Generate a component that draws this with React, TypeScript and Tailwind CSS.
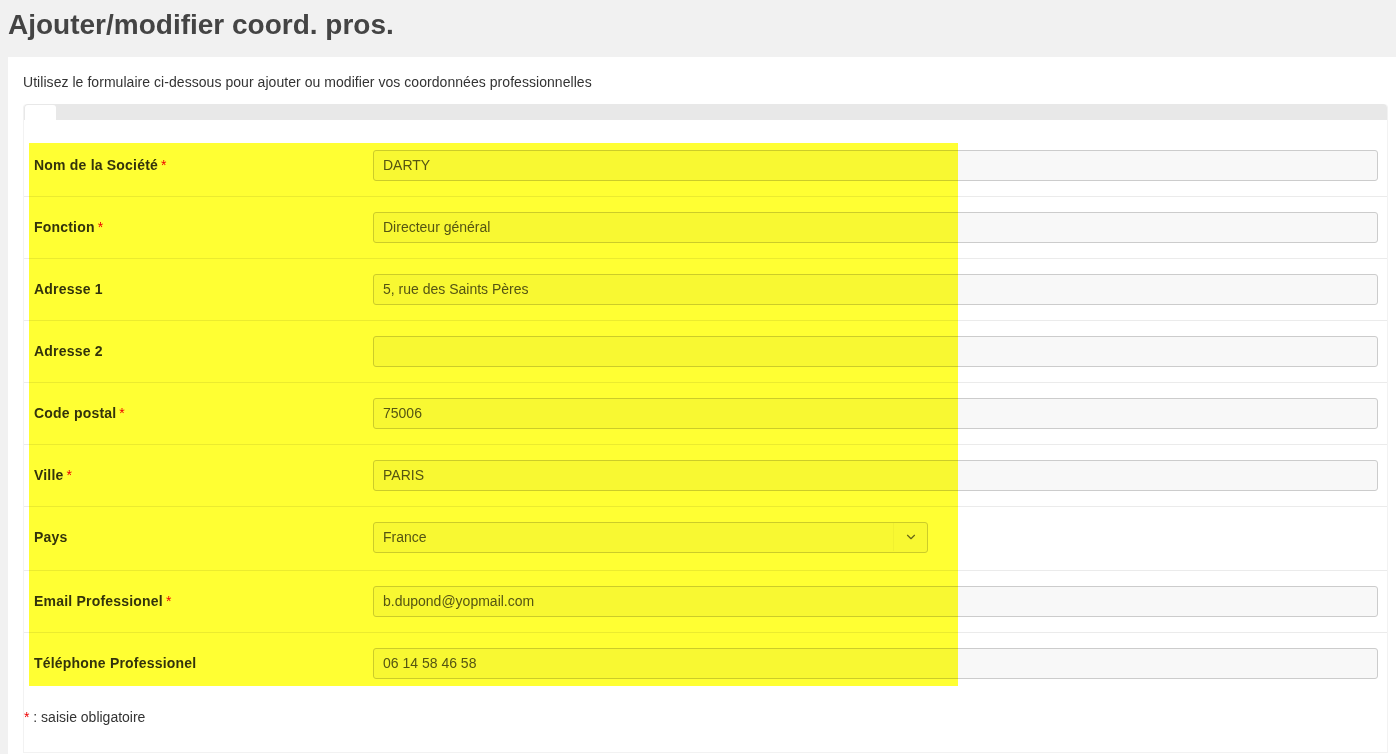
import React from 'react';
import { ChevronDown } from 'lucide-react';

type Field = { label: string; value: string; required?: boolean; select?: boolean };

const fields: Field[] = [
  { label: 'Nom de la Société', value: 'DARTY', required: true },
  { label: 'Fonction', value: 'Directeur général', required: true },
  { label: 'Adresse 1', value: '5, rue des Saints Pères' },
  { label: 'Adresse 2', value: '' },
  { label: 'Code postal', value: '75006', required: true },
  { label: 'Ville', value: 'PARIS', required: true },
  { label: 'Pays', value: 'France', select: true },
  { label: 'Email Professionel', value: 'b.dupond@yopmail.com', required: true },
  { label: 'Téléphone Professionel', value: '06 14 58 46 58' },
];

const FieldRow = ({ field, last }: { field: Field; last: boolean }) => (
  <div
    className={`flex items-center pl-[10px] pr-[9px] ${field.select ? 'pt-[15px] pb-[17px]' : 'py-[15px]'} ${last ? '' : 'border-b border-[#ebebeb]'}`}
  >
    <label className="w-[339px] shrink-0 text-[14px] font-bold tracking-[0.2px] text-[#333]">
      {field.label}
      {field.required && <span className="ml-[3px] font-normal text-[#e00]">*</span>}
    </label>
    {field.select ? (
      <div className="flex h-[31px] w-[555px] items-center rounded-[3px] border border-[#ccc] bg-[#f8f8f8] pb-[1px] text-[14px] text-[#555]">
        <span className="flex-1 pl-[9px]">{field.value}</span>
        <span className="flex h-full w-[34px] items-center justify-center border-l border-[#f0f0f0]">
          <ChevronDown className="h-[14px] w-[14px] text-[#666]" strokeWidth={2} />
        </span>
      </div>
    ) : (
      <input
        readOnly
        value={field.value}
        className="h-[31px] flex-1 rounded-[3px] border border-[#ccc] bg-[#f8f8f8] px-[9px] pb-[1px] text-[14px] text-[#555] outline-none"
      />
    )}
  </div>
);

export default function App() {
  return (
    <div className="min-h-screen bg-[#f1f1f1] font-['Liberation_Sans',Arial,sans-serif]">
      <header className="flex h-[57px] items-start px-2 pt-[11px]">
        <h1 className="text-[28px] font-bold leading-none text-[#444]">Ajouter/modifier coord. pros.</h1>
      </header>
      <main className="ml-2 min-h-[697px] bg-white pl-[15px] pr-[8px] pt-[16px]">
        <p className="text-[14px] leading-[18px] tracking-[0.05px] text-[#333]">
          Utilisez le formulaire ci-dessous pour ajouter ou modifier vos coordonnées professionnelles
        </p>
        <div className="relative mt-[13px] min-h-[649px] rounded-t-[4px] border border-t-0 border-[#f2f2f2]">
          <div className="flex h-4 rounded-t-[4px] bg-[#e8e8e8] pl-[1px] pt-[1px]">
            <div className="w-[31px] rounded-t-[3px] bg-white" />
          </div>
          <div className="pt-[15px]">
            {fields.map((f, i) => (
              <FieldRow key={f.label} field={f} last={i === fields.length - 1} />
            ))}
          </div>
          <p className="mt-[13px] text-[14px] text-[#333]">
            <span className="text-[#e00]">*</span> : saisie obligatoire
          </p>
          <div className="pointer-events-none absolute left-[5px] top-[39px] h-[543px] w-[929px] bg-[#ffff33] mix-blend-multiply" />
        </div>
      </main>
    </div>
  );
}
